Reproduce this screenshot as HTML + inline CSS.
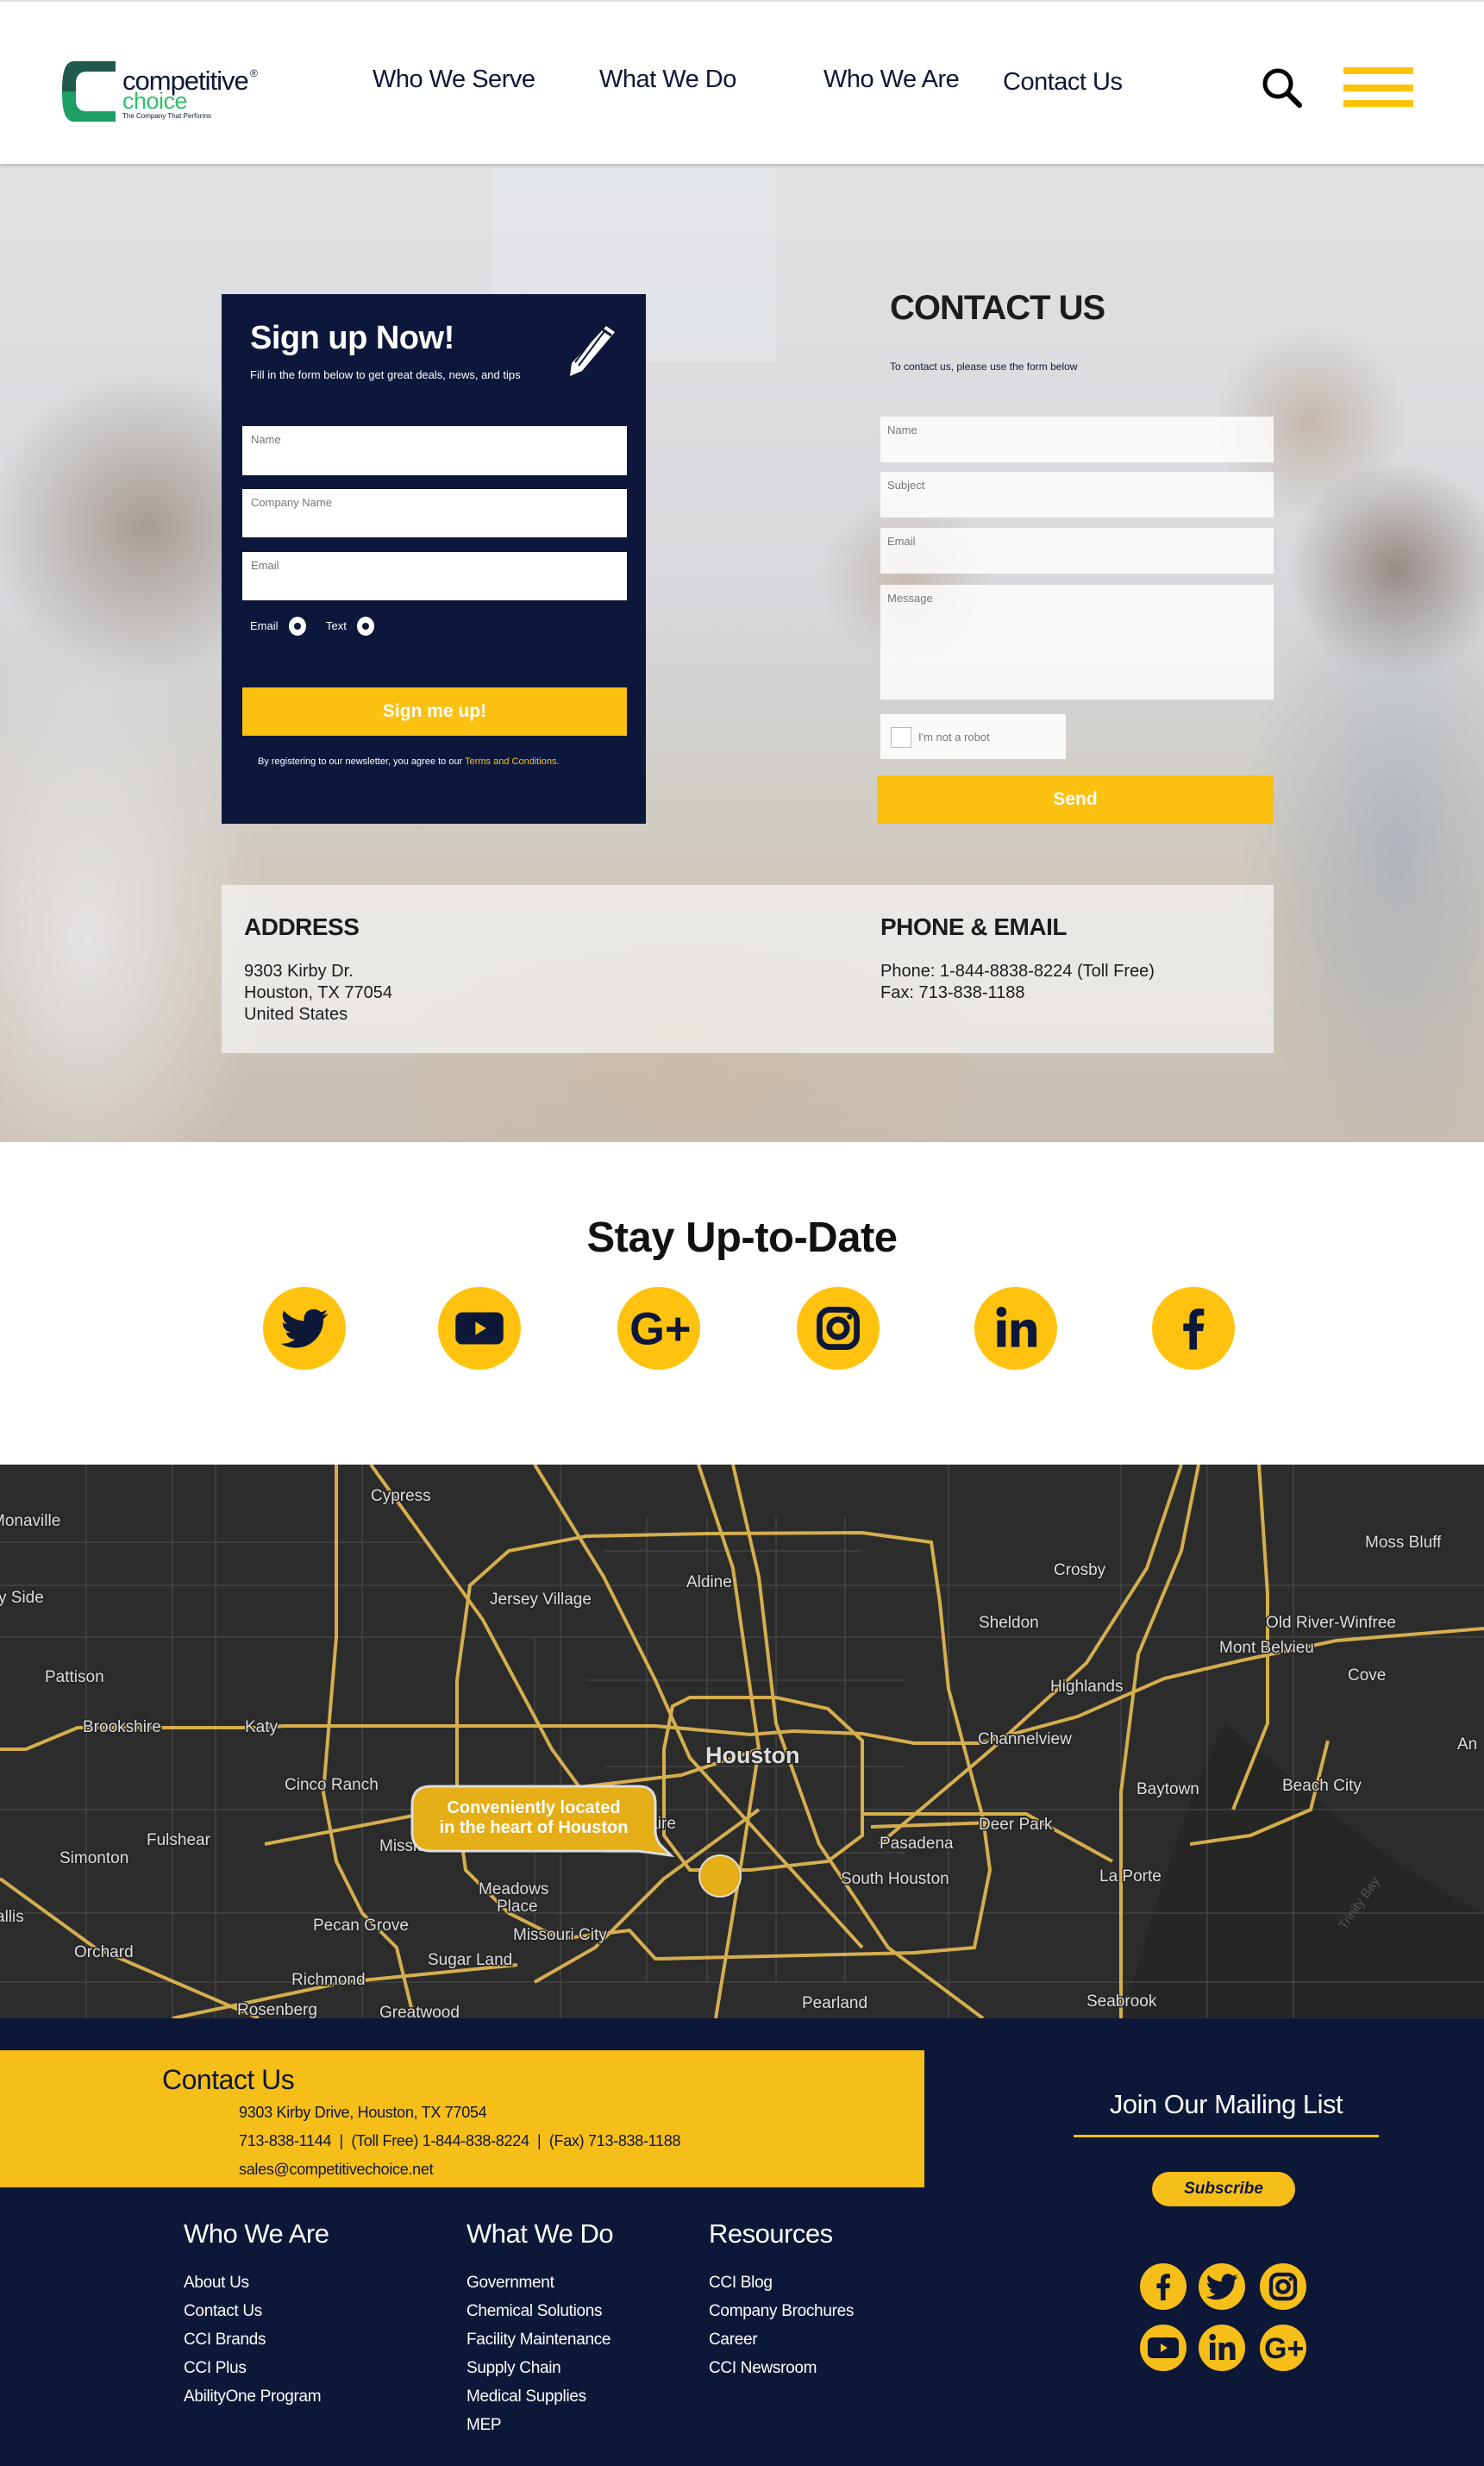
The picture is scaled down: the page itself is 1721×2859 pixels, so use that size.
<!DOCTYPE html>
<html><head><meta charset="utf-8">
<style>
*{margin:0;padding:0;box-sizing:border-box}
body{width:1721px;height:2859px;position:relative;overflow:hidden;font-family:"Liberation Sans",sans-serif;background:#fff}
.a{position:absolute}
.nav{font-size:29px;color:#0d1738;letter-spacing:-0.5px;white-space:nowrap}
.hero{left:0;top:190px;width:1721px;height:1134px;overflow:hidden;
background:
radial-gradient(ellipse 300px 520px at 100px 900px,rgba(235,235,238,.75),transparent 70%),
radial-gradient(ellipse 260px 260px at 170px 420px,rgba(120,95,75,.5),transparent 70%),
radial-gradient(ellipse 260px 500px at 1620px 800px,rgba(150,165,185,.55),transparent 70%),
radial-gradient(ellipse 180px 180px at 1620px 470px,rgba(100,75,60,.55),transparent 70%),
radial-gradient(ellipse 160px 160px at 1520px 300px,rgba(170,140,115,.45),transparent 70%),
radial-gradient(ellipse 500px 260px at 800px 1050px,rgba(205,185,160,.7),transparent 70%),
radial-gradient(ellipse 140px 140px at 1050px 480px,rgba(180,150,130,.45),transparent 70%),
linear-gradient(180deg,#dfe1e3 0%,#d6d8db 45%,#cfc7bb 75%,#c7bdb0 100%)}
.fld{position:absolute;background:#fff;font-size:13px;color:#777;padding:8px 10px}
.cf{position:absolute;background:rgba(255,255,255,.82);font-size:13px;color:#777;padding:8px 8px}
.fh{font-size:31px;color:#fff;letter-spacing:-0.5px}
.fl{font-size:19px;color:#fff;letter-spacing:-0.3px;line-height:33px}
</style></head><body>
<svg width="0" height="0" style="position:absolute">
<defs>
<symbol id="tw" viewBox="0 0 24 24"><path d="M22 5.8c-.7.3-1.5.5-2.3.6.8-.5 1.5-1.3 1.8-2.2-.8.5-1.7.8-2.6 1a4.1 4.1 0 0 0-7 3.7C8.5 8.7 5.5 7.1 3.4 4.6c-1.100 1.9-.5 4.3 1.300 5.500-.7 0-1.300-.2-1.900-.5 0 2 1.400 3.700 3.300 4.100-.6.2-1.200.2-1.900.1.5 1.700 2.100 2.800 3.800 2.900A8.300 8.300 0 0 1 2 18.400 11.700 11.700 0 0 0 20 8c.8-.6 1.500-1.300 2-2.200z" fill="#0d1738"/></symbol>
<symbol id="yt" viewBox="0 0 24 24"><rect x="3" y="6" width="18" height="12" rx="2.5" fill="#0d1738"/><path d="M10.5 9.5v5l4-2.5z" fill="#ffc20e"/></symbol>
<symbol id="gp" viewBox="0 0 24 24"><text x="1" y="18" font-family="Liberation Sans" font-weight="bold" font-size="17" fill="#0d1738">G+</text></symbol>
<symbol id="ig" viewBox="0 0 24 24"><rect x="5" y="5" width="14" height="14" rx="4" fill="none" stroke="#0d1738" stroke-width="2.2"/><circle cx="12" cy="12" r="3.3" fill="none" stroke="#0d1738" stroke-width="2.2"/><circle cx="16.3" cy="7.7" r="1" fill="#0d1738"/></symbol>
<symbol id="li" viewBox="0 0 24 24"><rect x="5" y="9" width="3.2" height="10" fill="#0d1738"/><circle cx="6.6" cy="5.8" r="1.9" fill="#0d1738"/><path d="M10.3 9h3v1.5c.6-1 1.8-1.8 3.3-1.8 2.4 0 3.2 1.6 3.2 4V19h-3.2v-5.6c0-1.3-.4-2.1-1.5-2.1s-1.7.9-1.7 2.1V19h-3.1z" fill="#0d1738"/></symbol>
<symbol id="fb" viewBox="0 0 24 24"><path d="M13.3 20v-7h2.3l.4-2.8h-2.7V8.5c0-.8.3-1.3 1.4-1.3H16V4.7c-.3 0-1.1-.1-2-.1-2.1 0-3.5 1.3-3.5 3.6v2H8.2V13h2.3v7z" fill="#0d1738"/></symbol>
</defs></svg>

<!-- header -->
<div class="a" style="left:0;top:0;width:1721px;height:190px;background:#fff;border-top:2px solid #ddd;box-shadow:0 2px 4px rgba(0,0,0,.2);z-index:2">
 <svg class="a" style="left:66px;top:68px" width="70" height="72" viewBox="0 0 70 72"><path d="M20 1h48v12H34c-8 0-12 6-12 13v10H6C6 12 10 1 20 1z" fill="#1f5a4a"/><path d="M6 36h16v10c0 8 4 13 12 13h34v12H20C10 71 6 60 6 36z" fill="#1d9e63"/></svg>
 <div class="a" style="left:142px;top:74px;font-size:31px;color:#0d1738;letter-spacing:-1px">competitive</div>
 <div class="a" style="left:290px;top:76px;font-size:12px;color:#0d1738">®</div>
 <div class="a" style="left:142px;top:100px;font-size:27px;color:#2fbf6f;letter-spacing:-.5px">choice</div>
 <div class="a" style="left:142px;top:128px;font-size:8px;color:#0d1738">The Company That Performs</div>
 <div class="a nav" style="left:432px;top:74px">Who We Serve</div>
 <div class="a nav" style="left:695px;top:74px">What We Do</div>
 <div class="a nav" style="left:955px;top:74px">Who We Are</div>
 <div class="a nav" style="left:1163px;top:77px">Contact Us</div>
 <svg class="a" style="left:1460px;top:74px" width="56" height="52" viewBox="0 0 56 52"><circle cx="22" cy="21" r="15" fill="none" stroke="#000" stroke-width="5"/><path d="M33 32l14 14" stroke="#000" stroke-width="6" stroke-linecap="round"/></svg>
 <div class="a" style="left:1558px;top:76px;width:81px;height:8px;background:#ffc20e"></div>
 <div class="a" style="left:1558px;top:96px;width:81px;height:8px;background:#ffc20e"></div>
 <div class="a" style="left:1558px;top:114px;width:81px;height:8px;background:#ffc20e"></div>
</div>

<!-- hero -->
<div class="a hero">
 <div class="a" style="left:570px;top:0;width:330px;height:230px;background:rgba(240,242,245,.3)"></div>
</div>
<div class="a" style="left:257px;top:341px;width:492px;height:614px;background:#0c173b">
 <div class="a" style="left:33px;top:30px;font-size:38px;font-weight:bold;color:#fff;letter-spacing:-.5px">Sign up Now!</div>
 <div class="a" style="left:33px;top:86px;font-size:13px;color:#fff">Fill in the form below to get great deals, news, and tips</div>
 <svg class="a" style="left:396px;top:33px" width="64" height="64" viewBox="0 0 64 64"><path d="M50 4l10 7L22 56 8 62l2-15z" fill="#fff"/><path d="M14 46l30-40M18 50l30-40" stroke="#0c173b" stroke-width="2"/><path d="M46 8l10 7" stroke="#0c173b" stroke-width="3"/></svg>
</div>
<div class="fld" style="left:281px;top:494px;width:446px;height:57px">Name</div>
<div class="fld" style="left:281px;top:567px;width:446px;height:56px">Company Name</div>
<div class="fld" style="left:281px;top:640px;width:446px;height:56px">Email</div>
<div class="a" style="left:290px;top:718px;font-size:13px;color:#fff">Email</div>
<div class="a" style="left:335px;top:715px;width:20px;height:22px;border-radius:50%;background:#fff"><div class="a" style="left:6px;top:7px;width:8px;height:8px;border-radius:50%;background:#0c173b"></div></div>
<div class="a" style="left:378px;top:718px;font-size:13px;color:#fff">Text</div>
<div class="a" style="left:414px;top:715px;width:20px;height:22px;border-radius:50%;background:#fff"><div class="a" style="left:6px;top:7px;width:8px;height:8px;border-radius:50%;background:#0c173b"></div></div>
<div class="a" style="left:281px;top:797px;width:446px;height:56px;background:#fcc010;color:#fff;font-weight:bold;font-size:21px;text-align:center;line-height:56px">Sign me up!</div>
<div class="a" style="left:299px;top:877px;font-size:11px;color:#fff;white-space:nowrap">By registering to our newsletter, you agree to our <span style="color:#fcc010">Terms and Conditions.</span></div>

<div class="a" style="left:1032px;top:335px;font-size:40px;font-weight:bold;color:#1c1c1c;letter-spacing:-1px">CONTACT US</div>
<div class="a" style="left:1032px;top:418px;font-size:12px;color:#0c173b">To contact us, please use the form below</div>
<div class="cf" style="left:1021px;top:483px;width:456px;height:53px">Name</div>
<div class="cf" style="left:1021px;top:547px;width:456px;height:53px">Subject</div>
<div class="cf" style="left:1021px;top:612px;width:456px;height:53px">Email</div>
<div class="cf" style="left:1021px;top:678px;width:456px;height:133px">Message</div>
<div class="a" style="left:1021px;top:828px;width:215px;height:52px;background:rgba(255,255,255,.88)">
 <div class="a" style="left:12px;top:15px;width:24px;height:24px;border:1px solid #bbb;background:#fff"></div>
 <div class="a" style="left:44px;top:19px;font-size:13px;color:#777">I'm not a robot</div>
</div>
<div class="a" style="left:1017px;top:899px;width:460px;height:56px;background:#fcc010;color:#fff;font-weight:bold;font-size:21px;text-align:center;line-height:56px">Send</div>

<div class="a" style="left:257px;top:1026px;width:1220px;height:195px;background:rgba(245,245,245,.72)">
 <div class="a" style="left:26px;top:33px;font-size:28px;font-weight:bold;color:#1c1c1c;letter-spacing:-.5px">ADDRESS</div>
 <div class="a" style="left:26px;top:88px;font-size:20px;color:#1c1c1c;line-height:25px">9303 Kirby Dr.<br>Houston, TX 77054<br>United States</div>
 <div class="a" style="left:764px;top:33px;font-size:28px;font-weight:bold;color:#1c1c1c;letter-spacing:-.5px">PHONE &amp; EMAIL</div>
 <div class="a" style="left:764px;top:88px;font-size:20px;color:#1c1c1c;line-height:25px">Phone: 1-844-8838-8224 (Toll Free)<br>Fax: 713-838-1188</div>
</div>

<!-- stay up to date -->
<div class="a" style="left:0;top:1407px;width:1721px;text-align:center;font-size:49px;font-weight:bold;color:#111;letter-spacing:-.5px">Stay Up-to-Date</div>
<svg class="a" style="left:0;top:1490px" width="1721" height="100">
 <g fill="#ffc20e"><circle cx="353" cy="50" r="48"/><circle cx="556" cy="50" r="48"/><circle cx="764" cy="50" r="48"/><circle cx="972" cy="50" r="48"/><circle cx="1178" cy="50" r="48"/><circle cx="1384" cy="50" r="48"/></g>
 <use href="#tw" x="320" y="17" width="66" height="66"/>
 <use href="#yt" x="519" y="13" width="74" height="74"/>
 <use href="#gp" x="727" y="13" width="74" height="74"/>
 <use href="#ig" x="935" y="13" width="74" height="74"/>
 <use href="#li" x="1141" y="13" width="74" height="74"/>
 <use href="#fb" x="1347" y="13" width="74" height="74"/>
</svg>

<!-- map -->
<svg class="a" style="left:0;top:1698px" width="1721" height="642" viewBox="0 0 1721 642">
 <rect width="1721" height="642" fill="#2c2c2c"/>
 <path d="M1420 300C1520 380 1600 460 1721 520V642H1300C1330 560 1360 420 1420 300z" fill="#262626"/>
 <g stroke="#444" stroke-width="1.5" fill="none">
  <path d="M0 90H500M0 200H1721M0 400H1721M0 520H1721M100 0V642M250 0V642M420 0V642M650 0V642M1100 0V642M1300 0V642M1500 0V642M0 600H1721M0 140H1721M200 0V642M1400 0V642"/>
  <path d="M700 100H1000M680 250H1050M700 350H1050M700 450H1050M750 60V600M820 60V600M900 60V600M980 60V600M620 200V550"/>
 </g>
 <g stroke="#e8bd52" stroke-width="4" fill="none" opacity=".9">
  <path d="M0 330L30 330L90 305H300L330 303H760L870 313L920 309L1000 312L1060 323H1135L1250 292L1350 248L1440 227L1550 204L1721 190"/>
  <path d="M680 83L820 80L1000 79L1080 90L1090 160L1100 260L1140 410L1148 470L1130 560L1060 566L760 573L730 540L650 550L590 520L540 470L530 400L530 250L545 140L590 100Z"/>
  <path d="M780 280L800 270H900L960 283L1000 320L1000 430L960 460L870 470L800 470L770 430L770 330Z"/>
  <path d="M390 0L390 200L375 380L390 460L420 520L460 560L480 642"/>
  <path d="M810 0L850 120L870 260L880 330L860 460L830 642"/>
  <path d="M850 0L880 130L900 300L950 440L1030 560L1140 642"/>
  <path d="M1370 0L1330 120L1260 230L1150 330L1020 440"/>
  <path d="M1390 0L1370 100L1320 220L1300 380L1300 642"/>
  <path d="M1460 0L1470 150L1470 300L1430 400"/>
  <path d="M620 0L700 130L760 250L800 340L900 450L1000 560"/>
  <path d="M430 0L560 180L640 330L720 440"/>
  <path d="M307 440L620 380L790 360L880 330"/>
  <path d="M1000 405H1190L1290 460"/>
  <path d="M1010 420L1150 415"/>
  <path d="M880 400L770 480L690 560L620 600"/>
  <path d="M0 480L110 560L300 642"/>
  <path d="M200 642L400 600L600 580"/>
  <path d="M1540 320L1520 400L1450 430L1380 440"/>
 </g>
 <g font-family="Liberation Sans" font-size="19" fill="#ddd" stroke="#222" stroke-width="3" paint-order="stroke">
  <text x="430" y="42">Cypress</text><text x="-10" y="71">Monaville</text><text x="796" y="142">Aldine</text>
  <text x="568" y="162">Jersey Village</text><text x="1222" y="128">Crosby</text><text x="1583" y="96">Moss Bluff</text>
  <text x="1135" y="189">Sheldon</text><text x="1468" y="189">Old River-Winfree</text><text x="1414" y="218">Mont Belvieu</text>
  <text x="-2" y="160">y Side</text><text x="52" y="252">Pattison</text><text x="1218" y="263">Highlands</text>
  <text x="1563" y="250">Cove</text><text x="96" y="310">Brookshire</text><text x="284" y="310">Katy</text>
  <text x="1134" y="324">Channelview</text><text x="1690" y="330">An</text><text x="330" y="377">Cinco Ranch</text>
  <text x="1318" y="382">Baytown</text><text x="1487" y="378">Beach City</text><text x="170" y="441">Fulshear</text>
  <text x="1135" y="423">Deer Park</text><text x="1020" y="445">Pasadena</text><text x="69" y="462">Simonton</text>
  <text x="1275" y="483">La Porte</text><text x="975" y="486">South Houston</text><text x="555" y="498">Meadows</text>
  <text x="576" y="518">Place</text><text x="363" y="540">Pecan Grove</text><text x="595" y="551">Missouri City</text>
  <text x="496" y="580">Sugar Land</text><text x="86" y="571">Orchard</text><text x="338" y="603">Richmond</text>
  <text x="275" y="638">Rosenberg</text><text x="440" y="641">Greatwood</text><text x="930" y="630">Pearland</text>
  <text x="1260" y="628">Seabrook</text><text x="-5" y="530">allis</text><text x="440" y="448">Mission Bend</text><text x="748" y="422">laire</text>
  <text x="818" y="346" font-size="27" font-weight="bold">Houston</text>
 </g>
 <text x="1560" y="540" font-family="Liberation Sans" font-size="15" fill="#555" transform="rotate(-55 1560 540)">Trinity Bay</text>
 <path d="M500 373H740Q760 373 760 393V425Q760 432 765 440L778 453L740 448H500Q478 448 478 426V395Q478 373 500 373Z" fill="#e5ad16" stroke="#ddd" stroke-width="3"/>
 <text x="619" y="404" text-anchor="middle" font-family="Liberation Sans" font-weight="bold" font-size="20" fill="#fff">Conveniently located</text>
 <text x="619" y="427" text-anchor="middle" font-family="Liberation Sans" font-weight="bold" font-size="20" fill="#fff">in the heart of Houston</text>
 <circle cx="835" cy="477" r="24" fill="#e5ad16" stroke="#ddd" stroke-width="2"/>
</svg>

<!-- footer -->
<div class="a" style="left:0;top:2340px;width:1721px;height:519px;background:#0d1738">
 <div class="a" style="left:0;top:37px;width:1072px;height:159px;background:#f6be18">
  <div class="a" style="left:188px;top:16px;font-size:32px;color:#0d1738;letter-spacing:-.5px">Contact Us</div>
  <div class="a" style="left:277px;top:56px;font-size:18px;color:#0d1738;line-height:33px;letter-spacing:-.3px">9303 Kirby Drive, Houston, TX 77054<br>713-838-1144 &nbsp;|&nbsp; (Toll Free) 1-844-838-8224 &nbsp;|&nbsp; (Fax) 713-838-1188<br>sales@competitivechoice.net</div>
 </div>
 <div class="a" style="left:1245px;top:82px;width:354px;text-align:center;font-size:31px;color:#fff;letter-spacing:-.5px">Join Our Mailing List</div>
 <div class="a" style="left:1245px;top:135px;width:354px;height:3px;background:#f6be18"></div>
 <div class="a" style="left:1336px;top:178px;width:166px;height:40px;border-radius:20px;background:#f6be18;text-align:center;line-height:40px;font-size:19px;font-style:italic;font-weight:bold;color:#0d1738">Subscribe</div>
 <div class="a fh" style="left:213px;top:232px">Who We Are</div>
 <div class="a fh" style="left:541px;top:232px">What We Do</div>
 <div class="a fh" style="left:822px;top:232px">Resources</div>
 <div class="a fl" style="left:213px;top:290px">About Us<br>Contact Us<br>CCI Brands<br>CCI Plus<br>AbilityOne Program</div>
 <div class="a fl" style="left:541px;top:290px">Government<br>Chemical Solutions<br>Facility Maintenance<br>Supply Chain<br>Medical Supplies<br>MEP</div>
 <div class="a fl" style="left:822px;top:290px">CCI Blog<br>Company Brochures<br>Career<br>CCI Newsroom</div>
 <svg class="a" style="left:1310px;top:270px" width="220" height="160">
  <g fill="#f6be18"><circle cx="39" cy="41" r="27"/><circle cx="107" cy="41" r="27"/><circle cx="178" cy="41" r="27"/><circle cx="39" cy="112" r="27"/><circle cx="107" cy="112" r="27"/><circle cx="178" cy="112" r="27"/></g>
  <use href="#fb" x="15" y="17" width="48" height="48"/>
  <use href="#tw" x="85" y="19" width="44" height="44"/>
  <use href="#ig" x="154" y="17" width="48" height="48"/>
  <use href="#yt" x="15" y="88" width="48" height="48"/>
  <use href="#li" x="83" y="88" width="48" height="48"/>
  <use href="#gp" x="154" y="88" width="48" height="48"/>
 </svg>
</div>
</body></html>
